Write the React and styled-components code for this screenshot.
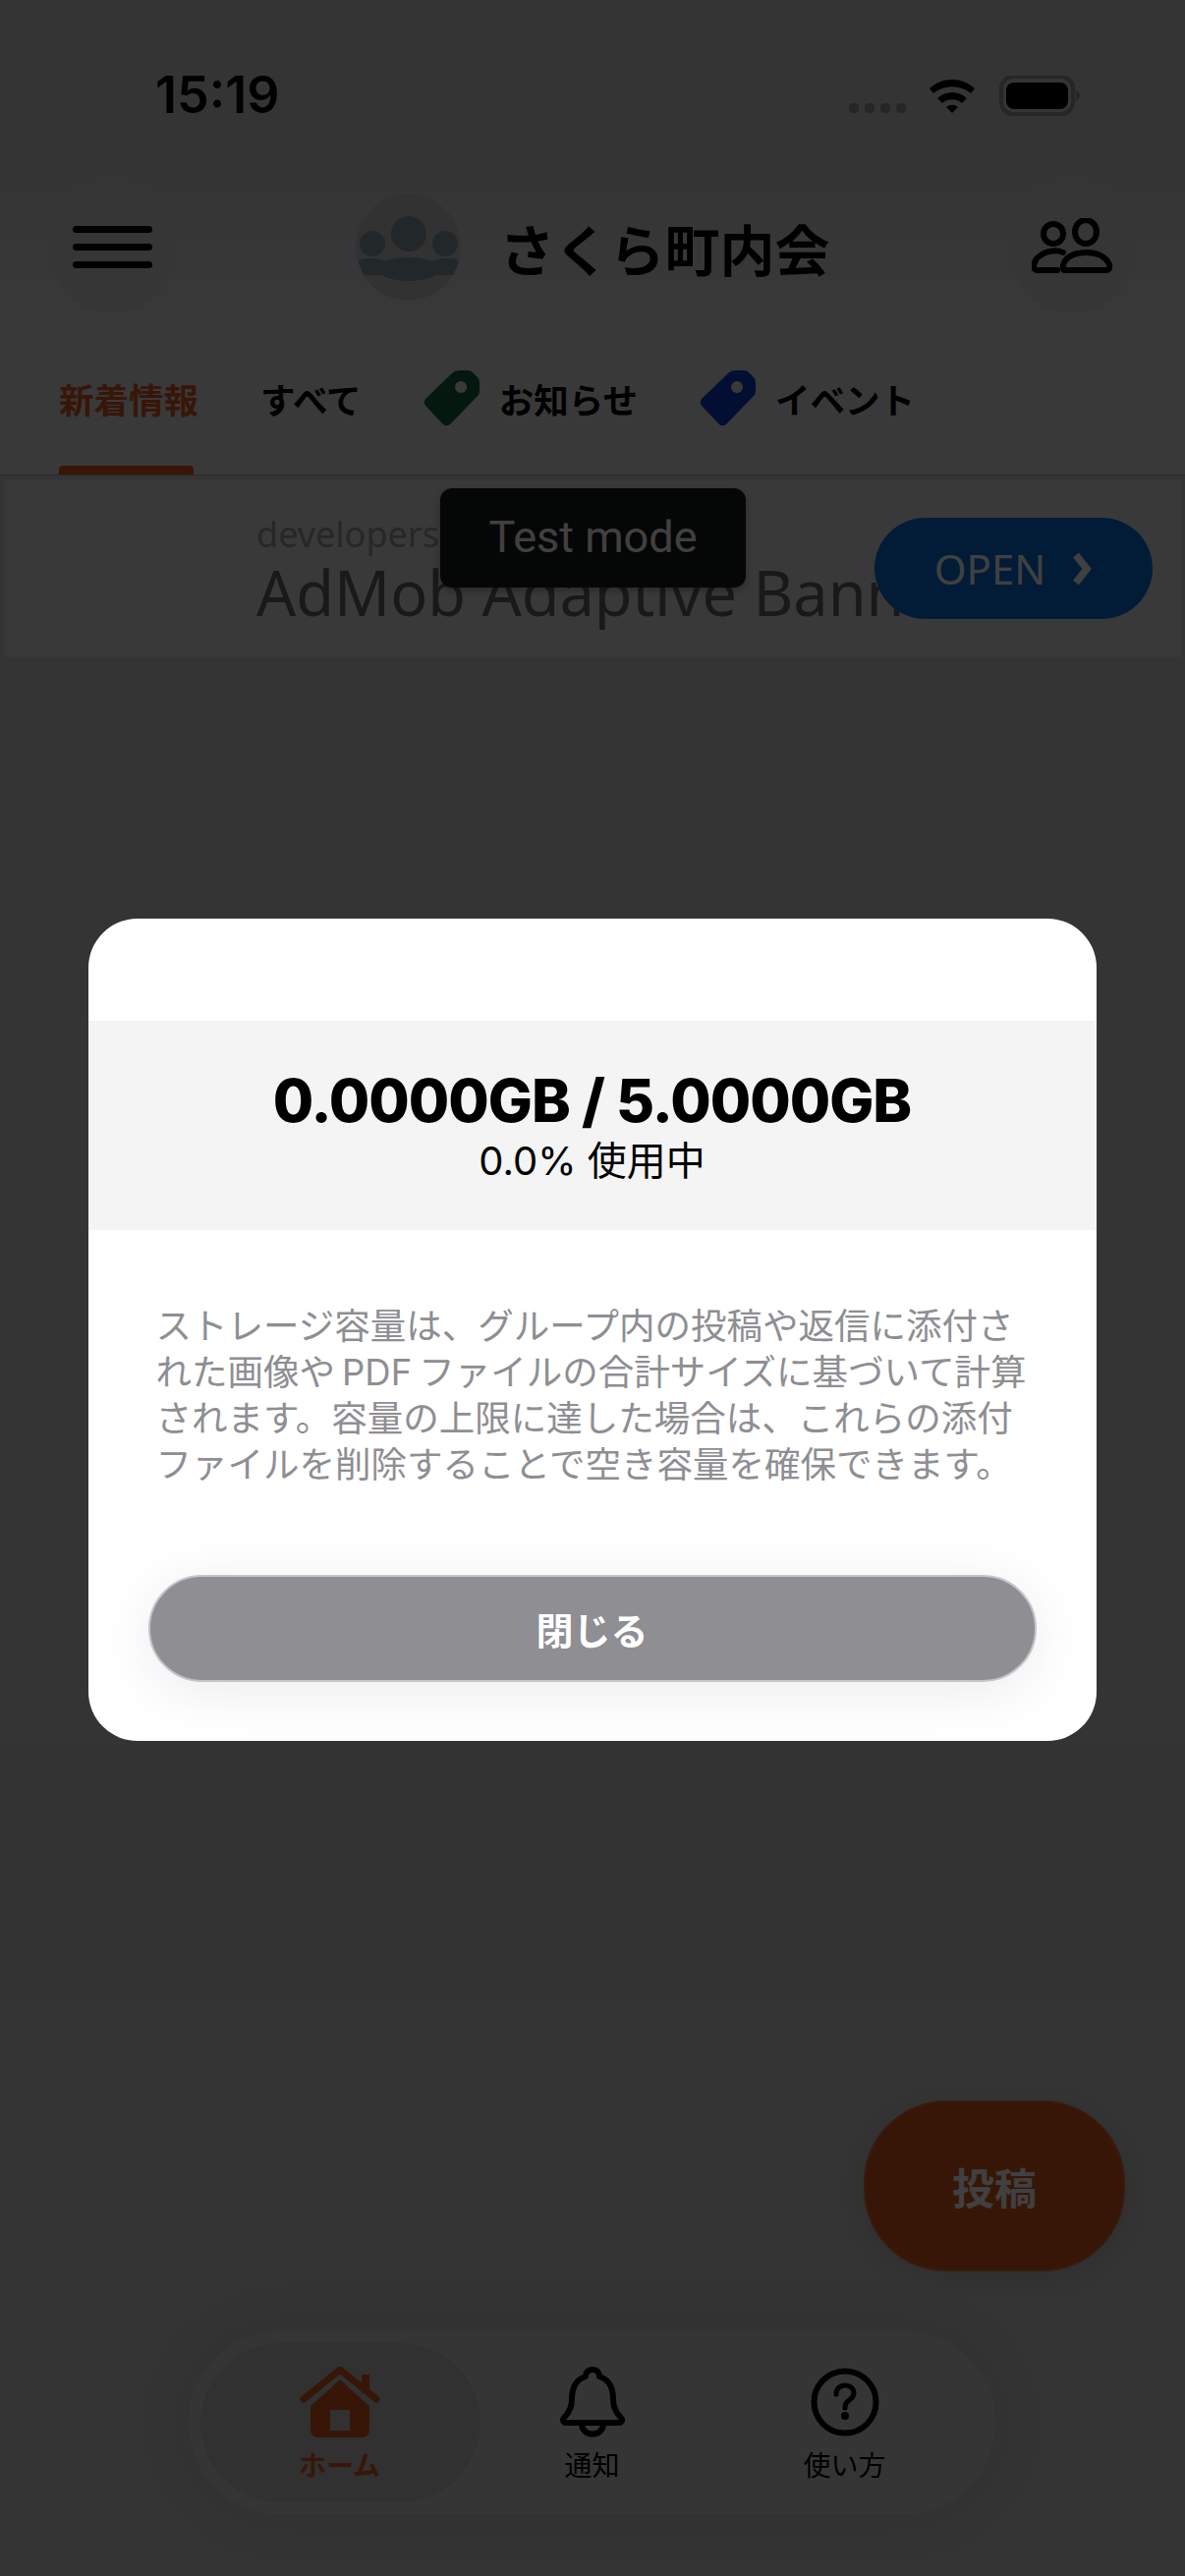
import React from "react";
import styled, { createGlobalStyle } from "styled-components";

const JP = `"Noto Sans CJK JP", "Noto Sans", sans-serif`;
const ORANGE = "#d95a22";

const GlobalStyle = createGlobalStyle`
  html, body {
    margin: 0;
    padding: 0;
    background: #333;
  }
  * {
    box-sizing: border-box;
  }
`;

const Screen = styled.div`
  position: relative;
  width: 1206px;
  height: 2622px;
  overflow: hidden;
  background: #cdcdcd;
  font-family: ${JP};
`;

const TopArea = styled.div`
  background: linear-gradient(#cfcfcf 0, #cfcfcf 150px, #e2e2e2 340px);
`;

const StatusBar = styled.div`
  height: 185px;
  padding: 72px 106px 0 158px;
  display: flex;
  align-items: flex-start;
  justify-content: space-between;
`;

const Clock = styled.div`
  font-family: Inter, sans-serif;
  font-size: 52px;
  line-height: 50px;
  font-weight: 600;
  letter-spacing: 0;
  color: #000;
`;

const StatusIcons = styled.div`
  display: flex;
  align-items: flex-start;
  margin-top: 5px;
`;

const Header = styled.header`
  height: 133px;
  padding: 0 48px;
  display: flex;
  align-items: center;
  justify-content: space-between;
`;

const RoundButton = styled.button`
  width: 133px;
  height: 133px;
  padding: 0;
  border: none;
  border-radius: 50%;
  background: #d6d6d6;
  display: flex;
  flex-direction: column;
  align-items: center;
  justify-content: center;
  gap: 11px;
`;

const MenuBar = styled.span`
  display: block;
  width: 81px;
  height: 7px;
  border-radius: 4px;
  background: #000;
`;

const TitleGroup = styled.div`
  display: flex;
  align-items: center;
  gap: 40px;
`;

const Avatar = styled.div`
  width: 107px;
  height: 109px;
  border-radius: 50%;
  overflow: hidden;
  background: #c6c6c6;
  flex-shrink: 0;
`;

const GroupName = styled.h1`
  margin: 0;
  font-size: 56px;
  line-height: 70px;
  font-weight: 700;
  color: #000;
  white-space: nowrap;
`;

const Tabs = styled.nav`
  padding: 60px 0 0 60px;
  display: flex;
  align-items: flex-start;
  gap: 63px;
  border-bottom: 1px solid #a8a8a8;
`;

const Tab = styled.div`
  display: flex;
  flex-direction: column;
`;

const TabLabel = styled.div`
  height: 54px;
  margin-bottom: 42px;
  display: flex;
  align-items: center;
  gap: 20px;
  font-size: 35.5px;
  font-weight: 700;
  white-space: nowrap;
  color: ${(p) => (p.$active ? ORANGE : "#000")};
`;

const Underline = styled.div`
  width: ${(p) => (p.$active ? "137px" : "0")};
  height: 9px;
  border-radius: 4px 4px 0 0;
  background: ${ORANGE};
`;

const Banner = styled.div`
  position: relative;
  height: 183px;
  margin: 3px 3px 0;
  padding: 34px 0 0 256px;
  border: 2px solid #d8d8d8;
  background: #e4e4e4;
  overflow: hidden;
`;

const BannerText = styled.div`
  width: 690px;
  overflow: hidden;
  white-space: nowrap;
  font-family: "Noto Sans", sans-serif;
`;

const BannerHost = styled.div`
  font-size: 36px;
  line-height: 42px;
  color: #9a9a9a;
`;

const BannerHeadline = styled.div`
  font-size: 63px;
  line-height: 76px;
  color: #666;
`;

const OpenButton = styled.div`
  position: absolute;
  top: 38px;
  right: 28px;
  width: 283px;
  height: 103px;
  border-radius: 52px;
  background: #0a6fe0;
  display: flex;
  align-items: center;
  justify-content: center;
  gap: 26px;
  font-family: "Noto Sans", sans-serif;
  font-size: 42px;
  color: #fff;
`;

const TestBadge = styled.div`
  position: absolute;
  top: 497px;
  left: 448px;
  width: 311px;
  height: 101px;
  border-radius: 12px;
  background: #171a18;
  box-shadow: 0 3px 8px rgba(0, 0, 0, 0.3);
  display: flex;
  align-items: center;
  justify-content: center;
  padding-bottom: 2px;
  font-family: Roboto, sans-serif;
  font-size: 45px;
  color: #fff;
`;

const PostButton = styled.button`
  position: absolute;
  top: 2138px;
  left: 879px;
  width: 266px;
  height: 174px;
  border: 2px solid #e06a30;
  border-radius: 84px;
  background: ${ORANGE};
  box-shadow: 0 6px 24px rgba(0, 0, 0, 0.1);
  font-family: ${JP};
  font-size: 43px;
  font-weight: 700;
  color: #fff;
`;

const BottomNav = styled.nav`
  position: absolute;
  top: 2373px;
  left: 192px;
  width: 821px;
  height: 186px;
  padding: 12px 25px;
  border-radius: 93px;
  background: #d4d4d4;
  box-shadow: 0 0 60px rgba(0, 0, 0, 0.08);
  display: flex;
`;

const NavItem = styled.div`
  position: relative;
  width: 257px;
  padding-top: 24px;
  display: flex;
  flex-direction: column;
  align-items: center;
  color: ${(p) => (p.$active ? ORANGE : "#000")};

  &::before {
    content: "";
    display: ${(p) => (p.$active ? "block" : "none")};
    position: absolute;
    inset: 0 -15px 0 -13px;
    border-radius: 81px;
    background: #c2c2c2;
  }

  & > * {
    position: relative;
  }
`;

const NavLabel = styled.div`
  margin-top: 9px;
  font-size: 28px;
  line-height: 36px;
  font-weight: ${(p) => (p.$active ? 700 : 400)};
  white-space: nowrap;
`;

const Dim = styled.div`
  position: absolute;
  inset: 0;
  padding-top: 935px;
  background: rgba(0, 0, 0, 0.75);
  display: flex;
  justify-content: center;
`;

const Modal = styled.div`
  width: 1026px;
  height: 837px;
  padding-top: 104px;
  border-radius: 50px;
  background: #fff;
  overflow: hidden;
  margin-left: -1px;
`;

const UsageBand = styled.div`
  height: 213px;
  padding-top: 44px;
  background: #f4f4f4;
  text-align: center;
  color: #000;
`;

const UsageAmount = styled.div`
  font-family: Inter, sans-serif;
  font-size: 60px;
  line-height: 74px;
  font-weight: 800;
  letter-spacing: -1px;
`;

const UsagePercent = styled.div`
  font-family: Inter, ${JP};
  font-size: 40px;
  line-height: 50px;
`;

const Note = styled.div`
  padding: 75px 0 0 69px;
  font-family: Inter, ${JP};
  font-size: 36.5px;
  line-height: 47px;
  color: #8e8e93;
  white-space: nowrap;
`;

const NoteLine = styled.span`
  display: block;
`;

const Latin = styled.span`
  margin: 0 7px;
`;

const CloseButton = styled.button`
  display: block;
  width: 904px;
  height: 109px;
  margin: 88px 0 0 61px;
  border: 2px solid #c4c4ca;
  border-radius: 55px;
  background: #8e8e93;
  box-shadow: 0 10px 60px rgba(0, 0, 0, 0.08);
  font-family: ${JP};
  font-size: 38px;
  font-weight: 700;
  color: #fff;
`;

const SignalWifiBattery = () => (
  <svg width="236" height="42" viewBox="0 0 236 42">
    <g fill="#989898">
      <rect x="0" y="28" width="10" height="10" rx="4" />
      <rect x="16" y="28" width="10" height="10" rx="4" />
      <rect x="32" y="28" width="10" height="10" rx="4" />
      <rect x="48" y="28" width="10" height="10" rx="4" />
    </g>
    <path d="M82 13 C95 1 115 1 128 13 L124 18 C113 9 97 9 86 18 Z" fill="#000" />
    <path d="M90 23 C98 15 112 15 120 23 L115 28 C109 23 101 23 95 28 Z" fill="#000" />
    <path d="M99 32 C103 29 107 29 111 32 L105 38 Z" fill="#000" />
    <rect x="155" y="1" width="73" height="38" rx="12" fill="none" stroke="#989898" strokeWidth="4" />
    <rect x="160" y="7" width="63" height="27" rx="8" fill="#000" />
    <path d="M231 14 L235 18 V22 L231 26 Z" fill="#989898" />
  </svg>
);

const GroupGlyph = () => (
  <svg width="107" height="109" viewBox="0 0 107 109" fill="#889ca8">
    <circle cx="54" cy="41" r="18" />
    <circle cx="17" cy="51" r="13" />
    <circle cx="91" cy="51" r="13" />
    <ellipse cx="54" cy="77" rx="32" ry="12" />
    <path d="M3 68 C10 65 22 65 30 69 L28 83 H8 C5 78 4 73 3 68 Z" />
    <path d="M105 68 C98 65 86 65 78 69 L80 83 H100 C103 78 104 73 105 68 Z" />
  </svg>
);

const MembersIcon = () => (
  <svg width="84" height="60" viewBox="2 1 84 60" fill="none" stroke="#000" strokeWidth="6">
    <circle cx="24" cy="17" r="10" />
    <ellipse cx="57" cy="15" rx="11" ry="12" />
    <path d="M34 36 C29 34 24 34 20 35 C10 37 4 44 4 50 C4 52 5 54 8 54 H28" strokeLinecap="round" />
    <path d="M36 54 C33 54 33 50 35 46 C39 39 48 36 58 36 C68 36 77 40 81 48 C82 51 81 54 78 54 Z" strokeLinejoin="round" />
  </svg>
);

const TagIcon = ({ color }) => (
  <svg width="57" height="57" viewBox="0 0 57 57">
    <path
      fillRule="evenodd"
      fill={color}
      d="M36 0 H45 Q48 0 50 2 L55 7 Q57 9 57 12 V21 Q57 24 55 26 L28 54 Q24 58 20 55 L3 37 Q-1 33 2 29 L29 3 Q32 0 36 0 Z M38 11 A6 6 0 1 0 38.1 23 A6 6 0 1 0 38 11 Z"
    />
  </svg>
);

const Chevron = () => (
  <svg width="22" height="32" viewBox="0 0 22 32" fill="none" stroke="#fff" strokeWidth="7.5">
    <path d="M5 2 L16 16 L5 30" />
  </svg>
);

const HomeIcon = () => (
  <svg width="82" height="72" viewBox="0 0 82 72">
    <g fill={ORANGE}>
      <path d="M63 8 H71 V27 H63 Z" />
      <path
        fillRule="evenodd"
        d="M41 13 L71 40 V64 Q71 72 63 72 H19 Q11 72 11 64 V40 Z M31 44 V65 H51 V44 Z"
      />
    </g>
    <path d="M4 33 L41 3 L78 33" fill="none" stroke={ORANGE} strokeWidth="7" strokeLinecap="round" strokeLinejoin="round" />
  </svg>
);

const BellIcon = () => (
  <svg width="66" height="72" viewBox="0 0 66 72" fill="none" stroke="#000" strokeWidth="6" strokeLinejoin="round">
    <path d="M33 3 C28 3 26 6 26 10 C16 13 12 22 12 33 C12 42 9 47 4 52 C2 54 3 57 6 57 H60 C63 57 64 54 62 52 C57 47 54 42 54 33 C54 22 50 13 40 10 C40 6 38 3 33 3 Z" />
    <path d="M22 58 C22 72 44 72 44 58" />
  </svg>
);

const HelpIcon = () => (
  <svg width="72" height="72" viewBox="0 0 72 72" fill="none" stroke="#000">
    <circle cx="36" cy="36" r="31.5" strokeWidth="6" />
    <path d="M27 28 C27 22 31 19 36 19 C41 19 45 22 45 27 C45 32 41 33 38 36 C36 38 36 39 36 42" strokeWidth="5" strokeLinecap="round" />
    <circle cx="36" cy="50" r="4" fill="#000" stroke="none" />
  </svg>
);

const App = () => {
  return (
    <Screen>
      <GlobalStyle />
      <TopArea>
        <StatusBar>
          <Clock>15:19</Clock>
          <StatusIcons>
            <SignalWifiBattery />
          </StatusIcons>
        </StatusBar>

        <Header>
          <RoundButton>
            <MenuBar />
            <MenuBar />
            <MenuBar />
          </RoundButton>
          <TitleGroup>
            <Avatar>
              <GroupGlyph />
            </Avatar>
            <GroupName>さくら町内会</GroupName>
          </TitleGroup>
          <RoundButton>
            <MembersIcon />
          </RoundButton>
        </Header>

        <Tabs>
          <Tab>
            <TabLabel $active>新着情報</TabLabel>
            <Underline $active />
          </Tab>
          <Tab>
            <TabLabel>すべて</TabLabel>
            <Underline />
          </Tab>
          <Tab>
            <TabLabel>
              <TagIcon color="#14603c" />
              お知らせ
            </TabLabel>
          </Tab>
          <Tab>
            <TabLabel>
              <TagIcon color="#0a3ccc" />
              イベント
            </TabLabel>
          </Tab>
        </Tabs>
      </TopArea>

      <Banner>
        <BannerText>
          <BannerHost>developers</BannerHost>
          <BannerHeadline>AdMob Adaptive Banner</BannerHeadline>
        </BannerText>
        <OpenButton>
          OPEN
          <Chevron />
        </OpenButton>
      </Banner>
      <TestBadge>Test mode</TestBadge>

      <PostButton>投稿</PostButton>

      <BottomNav>
        <NavItem $active>
          <HomeIcon />
          <NavLabel $active>ホーム</NavLabel>
        </NavItem>
        <NavItem>
          <BellIcon />
          <NavLabel>通知</NavLabel>
        </NavItem>
        <NavItem>
          <HelpIcon />
          <NavLabel>使い方</NavLabel>
        </NavItem>
      </BottomNav>

      <Dim>
        <Modal>
          <UsageBand>
            <UsageAmount>0.0000GB / 5.0000GB</UsageAmount>
            <UsagePercent>0.0% 使用中</UsagePercent>
          </UsageBand>
          <Note>
            <NoteLine>ストレージ容量は、グループ内の投稿や返信に添付さ</NoteLine>
            <NoteLine>
              れた画像や<Latin>PDF</Latin>ファイルの合計サイズに基づいて計算
            </NoteLine>
            <NoteLine>されます。容量の上限に達した場合は、これらの添付</NoteLine>
            <NoteLine>ファイルを削除することで空き容量を確保できます。</NoteLine>
          </Note>
          <CloseButton>閉じる</CloseButton>
        </Modal>
      </Dim>
    </Screen>
  );
};

export default App;
